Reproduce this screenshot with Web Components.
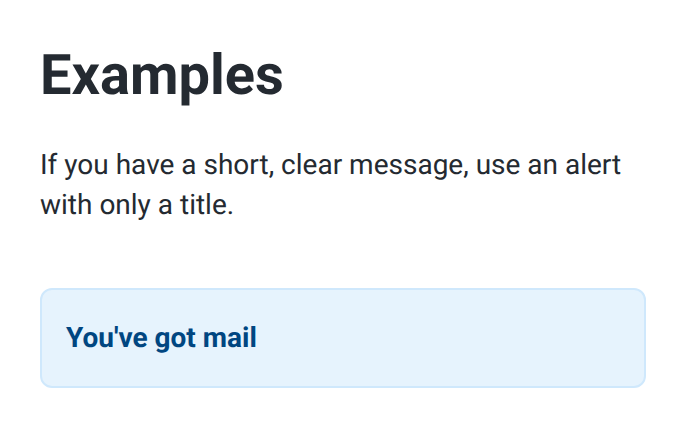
<!DOCTYPE html>
<html lang="en">
<head>
<meta charset="utf-8">
<title>Alert examples</title>
<style>
body { margin: 0; background: #fff; color: #24292f; font-family: Roboto, sans-serif; text-rendering: geometricPrecision; }
</style>
</head>
<body>
<example-section>
  <span slot="heading">Examples</span>
  <span slot="description">If you have a short, clear message, use an alert with only a title.</span>
  <alert-box>You've got mail</alert-box>
</example-section>
<script>
class ExampleSection extends HTMLElement {
  constructor() {
    super();
    this.attachShadow({ mode: 'open' }).innerHTML = `
      <style>
        :host { display: block; padding: 40px; color: #242a31; }
        h2 { margin: 0; font-size: 56px; line-height: 70px; font-weight: 700; }
        p { margin: 35px 0 63px; font-size: 28px; line-height: 40px; }
      </style>
      <h2><slot name="heading"></slot></h2>
      <p><slot name="description"></slot></p>
      <slot></slot>`;
  }
}
class AlertBox extends HTMLElement {
  constructor() {
    super();
    this.attachShadow({ mode: 'open' }).innerHTML = `
      <style>
        :host { display: block; padding: 28px 24px; border: 2px solid #cfe8fc; border-radius: 12px; background: #e6f3fd; color: #004681; }
        .title { font-size: 28px; line-height: 40px; font-weight: 700; }
      </style>
      <div class="title" role="status"><slot></slot></div>`;
  }
}
customElements.define('example-section', ExampleSection);
customElements.define('alert-box', AlertBox);
</script>
</body>
</html>
